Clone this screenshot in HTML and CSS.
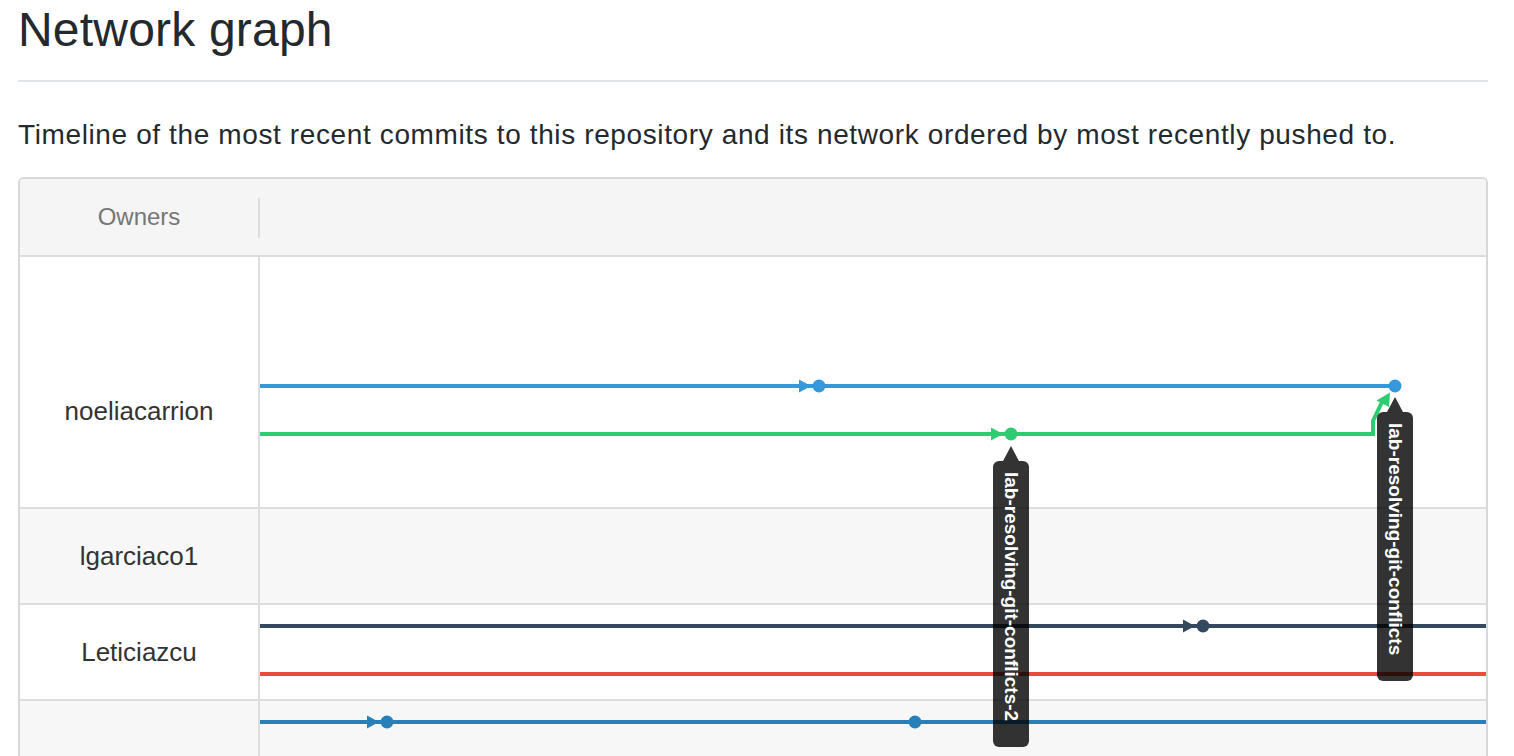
FILE: index.html
```html
<!DOCTYPE html>
<html lang="en">
<head>
<meta charset="utf-8">
<title>Network graph</title>
<link rel="stylesheet" href="styles.css">
</head>
<body>
<main class="page">
  <h1 class="title">Network graph</h1>
  <p class="desc">Timeline of the most recent commits to this repository and its network ordered by most recently pushed to.</p>
  <section class="network">
    <div class="net-head">
      <div class="owners-head">Owners</div>
      <div class="head-graph"></div>
    </div>
    <div class="net-body">
      <div class="row row-tall"><div class="owner owner-top">noeliacarrion</div><div class="lane"></div></div>
      <div class="row row-alt"><div class="owner">lgarciaco1</div><div class="lane"></div></div>
      <div class="row"><div class="owner">Leticiazcu</div><div class="lane"></div></div>
      <div class="row row-alt"><div class="owner"></div><div class="lane"></div></div>

      <svg class="graph" width="1226" height="540" viewBox="260 257 1226 540" xmlns="http://www.w3.org/2000/svg">
        <!-- noeliacarrion: blue branch -->
        <g fill="#3498db" stroke="#3498db">
          <line x1="260" y1="386" x2="1395" y2="386" stroke-width="4"/>
          <polygon points="799,379.5 811,386 799,392.5" stroke="none"/>
          <circle cx="819" cy="386" r="6.5" stroke="none"/>
          <circle cx="1395" cy="386" r="6.5" stroke="none"/>
        </g>
        <!-- noeliacarrion: green branch -->
        <g fill="#2ecc71" stroke="#2ecc71">
          <path d="M260 434 H1373 V421 L1382 402" fill="none" stroke-width="4" stroke-linejoin="miter"/>
          <polygon points="991,427.5 1003,434 991,440.5" stroke="none"/>
          <circle cx="1011" cy="434" r="6.5" stroke="none"/>
          <polygon points="1376.5,400.5 1390,392.5 1389,407" stroke="none"/>
        </g>
        <!-- Leticiazcu -->
        <g fill="#34495e" stroke="#34495e">
          <line x1="260" y1="626" x2="1486" y2="626" stroke-width="4"/>
          <polygon points="1183,619.5 1195,626 1183,632.5" stroke="none"/>
          <circle cx="1203" cy="626" r="6.5" stroke="none"/>
        </g>
        <line x1="260" y1="674" x2="1486" y2="674" stroke="#e74c3c" stroke-width="4"/>
        <!-- next owner -->
        <g fill="#2980b9" stroke="#2980b9">
          <line x1="260" y1="722" x2="1486" y2="722" stroke-width="4"/>
          <polygon points="367,715.5 379,722 367,728.5" stroke="none"/>
          <circle cx="387" cy="722" r="6.5" stroke="none"/>
          <circle cx="915" cy="722" r="6.5" stroke="none"/>
        </g>
      </svg>

      <div class="label label-one">lab-resolving-git-conflicts-2</div>
      <div class="label label-two">lab-resolving-git-conflicts</div>
    </div>
  </section>
</main>
</body>
</html>
```

FILE: styles.css
```css
* {
  box-sizing: border-box;
}

body {
  margin: 0;
  background: #ffffff;
  color: #24292e;
  font-family: "Liberation Sans", Arial, Helvetica, sans-serif;
}

.page {
  width: 1470px;
  margin-left: 18px;
}

.title {
  margin: 0;
  padding-bottom: 20px;
  font-size: 48px;
  font-weight: 400;
  line-height: 60px;
  letter-spacing: 0.2px;
  border-bottom: 2px solid #e1e4e8;
}

.desc {
  margin: 32px 0 21px;
  font-size: 28px;
  line-height: 42px;
  letter-spacing: 0.62px;
}

.network {
  border: 2px solid #d6d8da;
  border-bottom: none;
  border-radius: 6px 6px 0 0;
}

.net-head {
  display: flex;
  height: 78px;
  background: #f5f5f5;
  border-bottom: 2px solid #dddddd;
  border-radius: 4px 4px 0 0;
}

.owners-head {
  position: relative;
  display: flex;
  align-items: center;
  justify-content: center;
  width: 240px;
  padding-right: 2px;
  font-size: 24px;
  color: #767676;
}

.owners-head::after {
  content: "";
  position: absolute;
  right: 0;
  top: 19px;
  width: 2px;
  height: 40px;
  background: #dddddd;
}

.head-graph {
  flex: 1;
}

.net-body {
  position: relative;
}

.row {
  display: flex;
  height: 96px;
  border-bottom: 2px solid #dddddd;
  background: #ffffff;
}

.row-tall {
  height: 252px;
}

.row-alt {
  background: #f7f7f7;
}

.owner {
  display: flex;
  align-items: center;
  justify-content: center;
  width: 240px;
  border-right: 2px solid #dddddd;
  font-size: 26px;
  line-height: 30px;
  color: #333333;
}

.owner-top {
  align-items: flex-start;
  padding-top: 139px;
}

.lane {
  flex: 1;
}

.graph {
  position: absolute;
  left: 240px;
  top: 0;
  display: block;
}

.label {
  position: absolute;
  width: 36px;
  padding: 11px 0 26px;
  writing-mode: vertical-rl;
  line-height: 36px;
  font-size: 19px;
  font-weight: 700;
  color: #ffffff;
  white-space: nowrap;
  background: rgba(0, 0, 0, 0.8);
  border-radius: 6px;
}

.label::before {
  content: "";
  position: absolute;
  top: -15px;
  left: 10px;
  border-left: 8px solid transparent;
  border-right: 8px solid transparent;
  border-bottom: 15px solid rgba(0, 0, 0, 0.8);
}

.label-one {
  left: 973px;
  top: 204px;
}

.label-two {
  left: 1357px;
  top: 155px;
}
```
